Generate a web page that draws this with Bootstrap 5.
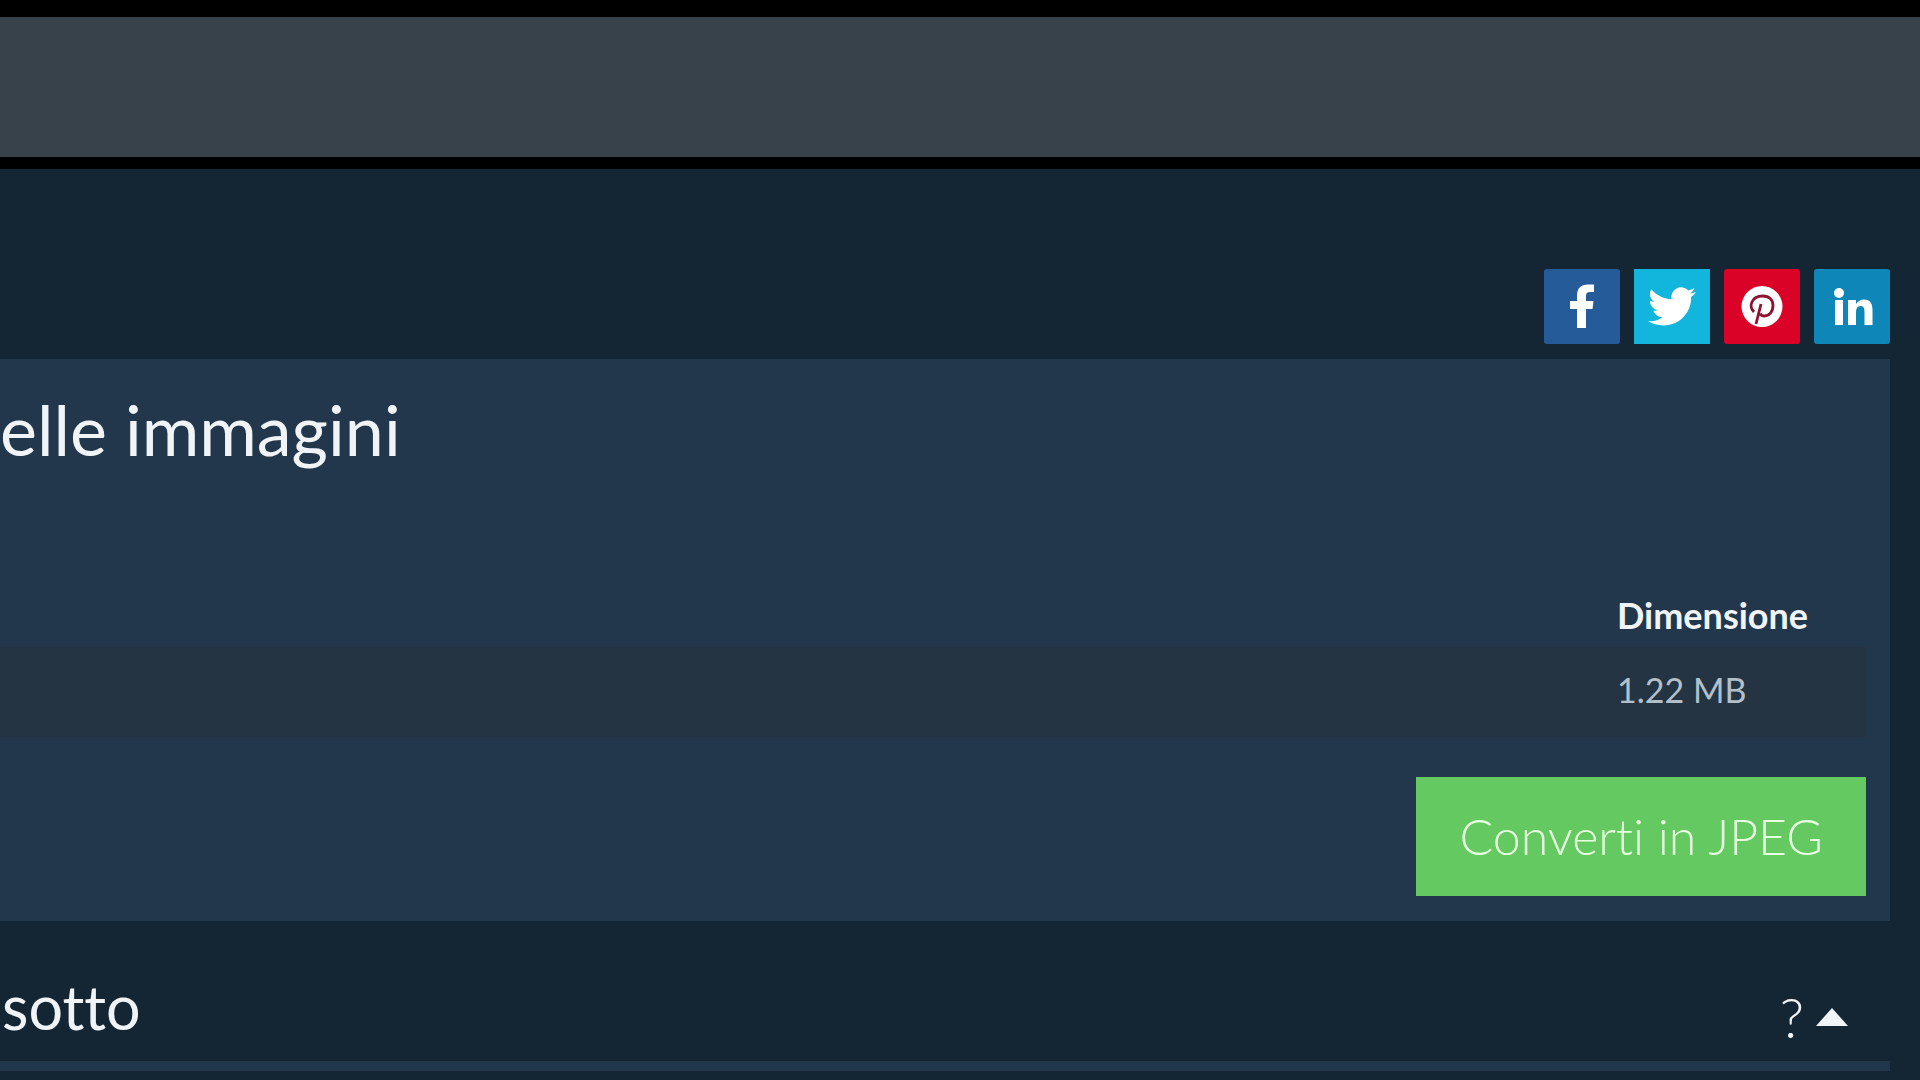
<!DOCTYPE html>
<html lang="it">
<head>
<meta charset="utf-8">
<meta name="viewport" content="width=device-width, initial-scale=1">
<title>Converti in JPEG</title>
<link href="https://cdn.jsdelivr.net/npm/bootstrap@5.3.0/dist/css/bootstrap.min.css" rel="stylesheet">
<style>
body { background: #142634; color: #f1f4f7; font-family: Lato, "Open Sans", sans-serif; font-variant-ligatures: none; overflow-x: hidden; }
.top-band { height: 169px; background: #38424a; border-top: 17px solid #000; border-bottom: 12px solid #000; }
.page-area { padding-right: 30px; }
.share-bar { padding-top: 100px; gap: 14px; margin-bottom: 15px; }
.share-link { width: 76px; height: 75px; border-radius: 3px; }
.share-link svg { width: 100%; height: 75px; fill: #fff; }
.share-fb { background: #265b99; }
.share-tw { background: #12b5db; border-radius: 0; }
.share-pin { background: #db0228; }
.share-in { background: #0e87b8; }
.convert-panel { background: #22374c; padding: 26px 24px 25px 0; }
.panel-title { font-size: 70px; line-height: 88px; }
.file-table { margin-top: 112px; margin-bottom: 40px; color: inherit; width: 100%; }
.file-table th, .file-table td { padding: 0; }
.file-table th { font-size: 36px; line-height: 60px; font-weight: 700; padding-bottom: 2px; }
.file-table td { height: 90px; line-height: 86px; padding-bottom: 4px; font-size: 34px; color: #b3c0ca; background: #243443; }
.file-table .size-col { width: 249px; }
.btn-convert { background: #63c960; color: #e6ffdf; border: 0; border-radius: 0; font-size: 50px; font-weight: 300; font-variant-ligatures: none; line-height: 63px; padding: 28px 43px; }
.btn-convert:hover { background: #57bb54; color: #fff; }
.section-head { padding: 48px 42px 16px 2px; border-bottom: 10px solid #22374c; height: 150px; }
.section-title { font-size: 61px; line-height: 76px; }
.help-toggle { border: 0; background: none; color: inherit; font-size: 56px; font-weight: 300; line-height: 64px; gap: 12px; padding: 16px 0 0; }
.help-toggle svg { width: 32px; height: 18px; fill: #f1f4f7; }
</style>
<script src="https://cdn.jsdelivr.net/npm/bootstrap@5.3.0/dist/js/bootstrap.bundle.min.js" defer></script>
</head>
<body>
<header class="top-band"></header>
<main class="page-area">
  <nav class="share-bar d-flex justify-content-end" aria-label="Condividi">
    <a class="share-link share-fb" href="#" aria-label="Facebook"><svg viewBox="0 0 76 75"><path d="M33 59V40h-7v-8h7v-5c0-8 4-11.500 11-11.500h6V23h-4c-3 0-4 1.500-4 4v5h7.500l-1 8H42v19z"/></svg></a>
    <a class="share-link share-tw" href="#" aria-label="Twitter"><svg viewBox="0 0 76 75"><path transform="translate(14 14) scale(2 1.950)" d="M23.950 4.570a10 10 0 0 1-2.820.770 4.960 4.960 0 0 0 2.160-2.720c-.950.550-2 .950-3.130 1.180a4.920 4.920 0 0 0-8.380 4.480C7.690 8.090 4.070 6.130 1.640 3.160a4.820 4.820 0 0 0-.670 2.480c0 1.710.870 3.210 2.190 4.100a4.900 4.900 0 0 1-2.230-.620v.060a4.920 4.920 0 0 0 3.950 4.830 5 5 0 0 1-2.210.080 4.940 4.940 0 0 0 4.600 3.420A9.870 9.870 0 0 1 0 19.540a14 14 0 0 0 7.550 2.210c9.050 0 14-7.500 14-13.980 0-.210 0-.420-.020-.630a9.940 9.940 0 0 0 2.460-2.550z"/></svg></a>
    <a class="share-link share-pin" href="#" aria-label="Pinterest"><svg viewBox="0 0 76 75"><circle cx="38" cy="37.500" r="20.500"/><path d="M30 43c-6-6-2-16 8.500-16 7 0 10.500 4 10.500 9.500 0 6.500-4 10.500-8.500 10.500-2.500 0-4-1-4.500-2.500M37 35 32 55" fill="none" stroke="#8f1230" stroke-width="2.800"/></svg></a>
    <a class="share-link share-in" href="#" aria-label="LinkedIn"><svg viewBox="0 0 76 75"><circle cx="25" cy="24" r="5"/><path d="M21 31h8v25h-8zM34 31h8v4c2-3 4.500-4.500 8-4.500 6 0 8.500 4 8.500 10.500v15h-8V43c0-4-1-6-4-6-3 0-4.500 2-4.500 6v13h-8z"/></svg></a>
  </nav>
  <section class="convert-panel">
    <h1 class="panel-title fw-normal mb-0">elle immagini</h1>
    <table class="file-table">
      <thead><tr><th aria-label="File"></th><th class="size-col" scope="col">Dimensione</th></tr></thead>
      <tbody><tr><td></td><td class="size-col">1.22 MB</td></tr></tbody>
    </table>
    <div class="d-flex justify-content-end"><button type="button" class="btn btn-convert">Converti in JPEG</button></div>
  </section>
  <section class="section-head d-flex justify-content-between align-items-start">
    <h2 class="section-title fw-normal mb-0">sotto</h2>
    <button type="button" class="help-toggle d-flex align-items-center"><span>?</span><svg viewBox="0 0 34 19" aria-hidden="true"><path d="M17 0 34 19H0z"/></svg></button>
  </section>
</main>
</body>
</html>
